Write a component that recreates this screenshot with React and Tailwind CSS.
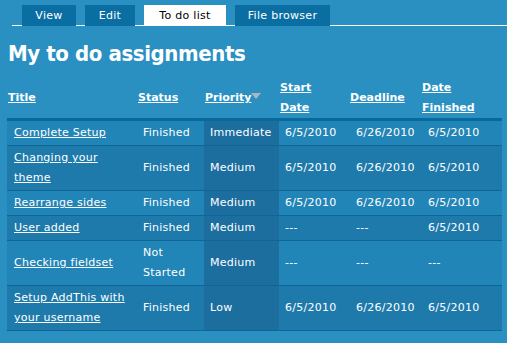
import React from "react";

const tabs = [
  { label: "View", width: "w-[54px]", active: false },
  { label: "Edit", width: "w-[50px]", active: false },
  { label: "To do list", width: "w-[82px]", active: true },
  { label: "File browser", width: "w-[95px]", active: false },
];

const rows = [
  { title: "Complete Setup", status: "Finished", priority: "Immediate", start: "6/5/2010", deadline: "6/26/2010", finished: "6/5/2010" },
  { title: "Changing your theme", status: "Finished", priority: "Medium", start: "6/5/2010", deadline: "6/26/2010", finished: "6/5/2010" },
  { title: "Rearrange sides", status: "Finished", priority: "Medium", start: "6/5/2010", deadline: "6/26/2010", finished: "6/5/2010" },
  { title: "User added", status: "Finished", priority: "Medium", start: "---", deadline: "---", finished: "6/5/2010" },
  { title: "Checking fieldset", status: "Not Started", priority: "Medium", start: "---", deadline: "---", finished: "---" },
  { title: "Setup AddThis with your username", status: "Finished", priority: "Low", start: "6/5/2010", deadline: "6/26/2010", finished: "6/5/2010" },
];

const App = () => {
  return (
    <div className="w-[507px] h-[343px] overflow-hidden bg-[#2a90c2] text-white text-[11px] font-['DejaVu_Sans',Verdana,sans-serif]">
      {/* Tabs */}
      <div className="ml-[12px] pt-[5px] pl-[10px] flex gap-[9px] border-b border-white">
        {tabs.map((tab) => (
          <div
            key={tab.label}
            className={`${tab.width} h-[21px] -mb-px text-center leading-[21px] tracking-[0.3px] ${
              tab.active ? "bg-white text-black" : "bg-[#0b6ea3] text-white"
            }`}
          >
            {tab.label}
          </div>
        ))}
      </div>

      {/* Title */}
      <h1 className="mt-[15px] ml-[8px] text-[22px] leading-[26px] font-bold tracking-[-0.4px] font-['DejaVu_Sans_Condensed','DejaVu_Sans',sans-serif]">
        My to do assignments
      </h1>

      {/* Table */}
      <table className="ml-[7px] mt-[11px] w-[495px] table-fixed border-collapse">
        <colgroup>
          <col className="w-[130px]" />
          <col className="w-[67px]" />
          <col className="w-[75px]" />
          <col className="w-[70px]" />
          <col className="w-[72px]" />
          <col className="w-[81px]" />
        </colgroup>
        <thead>
          <tr className="border-b-[3px] border-[#0a699c]">
            <th className="px-px text-left align-middle font-bold leading-[20px] underline">Title</th>
            <th className="px-px text-left align-middle font-bold leading-[20px] underline">Status</th>
            <th className="px-px text-left align-middle font-bold leading-[20px] whitespace-nowrap">
              <span className="underline">Priority</span>
              <svg width="10" height="6" viewBox="0 0 10 6" className="inline-block align-[2px]">
                <path d="M0 0 H10 L5 6 Z" fill="#a9b6bf" />
              </svg>
            </th>
            <th className="px-px text-left align-middle font-bold leading-[20px] underline">
              Start
              <br />
              Date
            </th>
            <th className="px-px text-left align-middle font-bold leading-[20px] underline">Deadline</th>
            <th className="px-px text-left align-middle font-bold leading-[20px] underline">
              Date
              <br />
              Finished
            </th>
          </tr>
        </thead>
        <tbody className="tracking-[0.25px]">
          {rows.map((row, index) => (
            <tr
              key={index}
              className={`border-b border-[#0e6698] ${index % 2 === 0 ? "bg-[#2285b8]" : "bg-[#1f7aac]"}`}
            >
              <td className="pl-[7px] pr-[6px] py-[2px] leading-[20px] align-middle">
                <span className="underline">{row.title}</span>
              </td>
              <td className="px-[6px] py-[2px] leading-[20px] align-middle">{row.status}</td>
              <td className="px-[6px] py-[2px] leading-[20px] align-middle bg-[#1c6e9f]">{row.priority}</td>
              <td className="px-[6px] py-[2px] leading-[20px] align-middle whitespace-nowrap">{row.start}</td>
              <td className="pl-[7px] pr-[6px] py-[2px] leading-[20px] align-middle whitespace-nowrap">{row.deadline}</td>
              <td className="pl-[7px] pr-[6px] py-[2px] leading-[20px] align-middle whitespace-nowrap">{row.finished}</td>
            </tr>
          ))}
        </tbody>
      </table>
    </div>
  );
};

export default App;
